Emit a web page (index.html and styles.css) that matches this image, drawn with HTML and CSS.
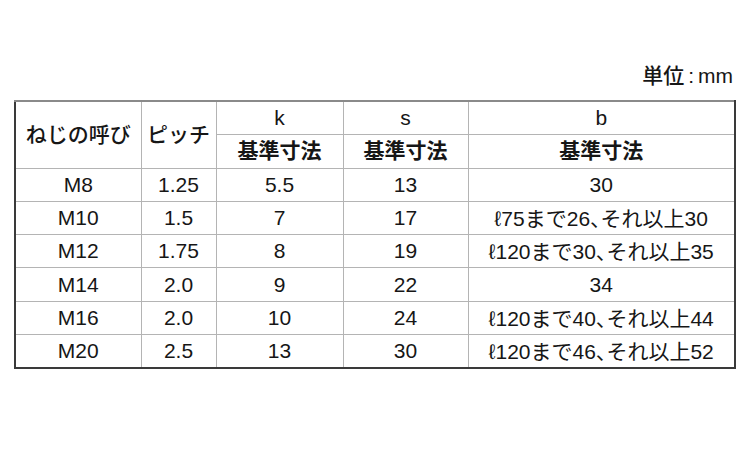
FILE: index.html
```html
<!DOCTYPE html>
<html lang="ja">
<head>
<meta charset="utf-8">
<link rel="stylesheet" href="styles.css">
</head>
<body>
<div class="page">
  <div class="unit">単位<span class="colon">:</span>mm</div>
  <table class="spec">
    <colgroup>
      <col class="c1"><col class="c2"><col class="c3"><col class="c4"><col class="c5">
    </colgroup>
    <tr class="h1">
      <td rowspan="2" class="jp">ねじの呼び</td>
      <td rowspan="2" class="jp">ピッチ</td>
      <td>k</td>
      <td>s</td>
      <td>b</td>
    </tr>
    <tr class="h2">
      <td class="jp strong">基準寸法</td>
      <td class="jp strong">基準寸法</td>
      <td class="jp strong">基準寸法</td>
    </tr>
    <tr><td>M8</td><td>1.25</td><td>5.5</td><td>13</td><td>30</td></tr>
    <tr><td>M10</td><td>1.5</td><td>7</td><td>17</td><td>ℓ75まで26<span class="comma">、</span>それ以上30</td></tr>
    <tr><td>M12</td><td>1.75</td><td>8</td><td>19</td><td>ℓ120まで30<span class="comma">、</span>それ以上35</td></tr>
    <tr><td>M14</td><td>2.0</td><td>9</td><td>22</td><td>34</td></tr>
    <tr><td>M16</td><td>2.0</td><td>10</td><td>24</td><td>ℓ120まで40<span class="comma">、</span>それ以上44</td></tr>
    <tr><td>M20</td><td>2.5</td><td>13</td><td>30</td><td>ℓ120まで46<span class="comma">、</span>それ以上52</td></tr>
  </table>
</div>
</body>
</html>
```

FILE: styles.css
```css
html, body {
  margin: 0;
  padding: 0;
  background: #ffffff;
}

.page {
  width: 750px;
  box-sizing: border-box;
  padding: 63px 14px 0 14px;
  font-family: "Liberation Sans", "Noto Sans CJK JP", sans-serif;
  color: #161616;
}

.unit {
  text-align: right;
  font-size: 21px;
  line-height: 25px;
  padding-right: 3px;
  margin-bottom: 12px;
  font-weight: 500;
}

.colon {
  margin: 0 4px;
  font-weight: 400;
}

.spec {
  border-collapse: collapse;
  width: 722px;
  table-layout: fixed;
  border: 2px solid #3a3a3a;
  border-top-color: #8a8a8a;
}

.c1 { width: 126px; }
.c2 { width: 75px; }
.c3 { width: 127px; }
.c4 { width: 125px; }
.c5 { width: auto; }

.spec td {
  border: 1px solid #b4b4b4;
  text-align: center;
  vertical-align: middle;
  font-size: 21px;
  line-height: 24px;
  padding: 0;
  height: 32.3px;
  white-space: nowrap;
}

.spec .jp {
  font-weight: 500;
}

.spec .strong {
  font-weight: 700;
}

.comma {
  font-feature-settings: "palt" 1;
  font-family: "Noto Sans CJK JP", sans-serif;
}
```
